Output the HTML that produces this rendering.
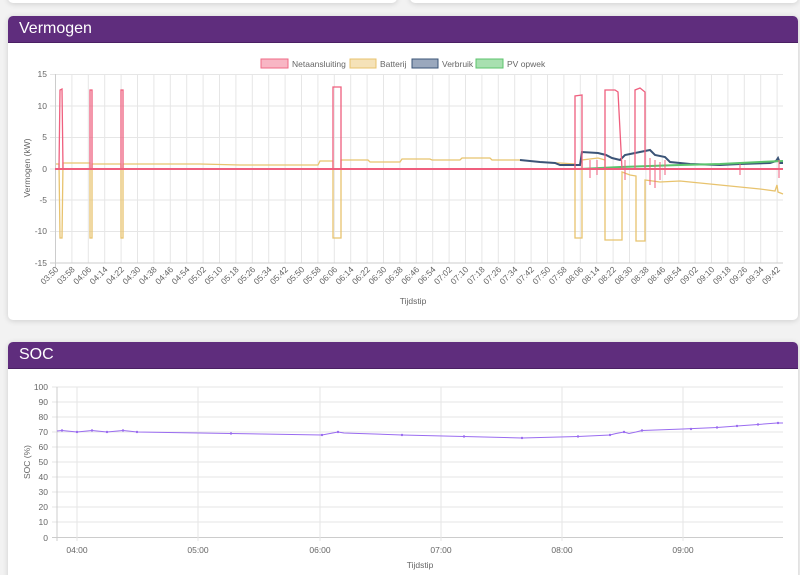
<!DOCTYPE html>
<html><head><meta charset="utf-8"><style>
html,body{margin:0;width:800px;height:575px;overflow:hidden}
body{background:#f2f2f2;font-family:"Liberation Sans",Arial,sans-serif;position:relative}
.card{position:absolute;background:#fff;border-radius:5px;box-shadow:0 1px 6px rgba(0,0,0,.15);overflow:hidden}
.hd{background:#5f2d7d;color:#fff;font-size:16px;height:26px;line-height:26px;padding-left:11px;border-bottom:1px solid #4a1f63}
svg{position:absolute;left:0;top:0}
text{font-family:"Liberation Sans",Arial,sans-serif;fill:#666;font-size:8.5px}
</style></head><body>
<div class="card" style="left:8px;top:-10px;width:389px;height:13px"></div>
<div class="card" style="left:410px;top:-10px;width:388px;height:13px"></div>
<div class="card" style="left:8px;top:16px;width:790px;height:304px"><div class="hd">Vermogen</div></div>
<div class="card" style="left:8px;top:342px;width:790px;height:245px"><div class="hd">SOC</div></div>
<svg width="800" height="575" viewBox="0 0 800 575">
<defs>
<pattern id="vg" x="55" y="0" width="16.4" height="600" patternUnits="userSpaceOnUse"><line x1="0.5" y1="0" x2="0.5" y2="600" stroke="#e6e6e6" stroke-width="1"/></pattern>
</defs>
<rect x="261" y="59" width="27" height="9" fill="#f8b6c4" stroke="#ef6a86"/><text x="292" y="67" font-size="9">Netaansluiting</text>
<rect x="350" y="59" width="26" height="9" fill="#f5e2b8" stroke="#e8c36e"/><text x="380" y="67" font-size="9">Batterij</text>
<rect x="412" y="59" width="26" height="9" fill="#9aa8bd" stroke="#3b5477"/><text x="442" y="67" font-size="9">Verbruik</text>
<rect x="476" y="59" width="27" height="9" fill="#a8e0b0" stroke="#5cc36d"/><text x="507" y="67" font-size="9">PV opwek</text>
<rect x="55" y="74" width="729" height="189" fill="url(#vg)"/>
<g stroke="#e6e6e6"><line x1="50" y1="74.5" x2="783" y2="74.5"/><line x1="50" y1="106" x2="783" y2="106"/><line x1="50" y1="137.5" x2="783" y2="137.5"/><line x1="50" y1="169" x2="783" y2="169"/><line x1="50" y1="200" x2="783" y2="200"/><line x1="50" y1="231.5" x2="783" y2="231.5"/><line x1="50" y1="263" x2="783" y2="263" stroke="#ccc"/><line x1="55.5" y1="74" x2="55.5" y2="267" stroke="#ccc"/></g>
<g text-anchor="end"><text x="47" y="77">15</text><text x="47" y="109">10</text><text x="47" y="140">5</text><text x="47" y="172">0</text><text x="47" y="203">-5</text><text x="47" y="234">-10</text><text x="47" y="266">-15</text></g>
<text transform="translate(30,168) rotate(-90)" text-anchor="middle">Vermogen (kW)</text>
<text x="413" y="304" text-anchor="middle" font-size="9">Tijdstip</text>
<g text-anchor="end" font-size="8">
<text transform="translate(59,270) rotate(-45)">03:50</text><text transform="translate(75.4,270) rotate(-45)">03:58</text><text transform="translate(91.8,270) rotate(-45)">04:06</text><text transform="translate(108.2,270) rotate(-45)">04:14</text><text transform="translate(124.6,270) rotate(-45)">04:22</text><text transform="translate(141,270) rotate(-45)">04:30</text><text transform="translate(157.4,270) rotate(-45)">04:38</text><text transform="translate(173.8,270) rotate(-45)">04:46</text><text transform="translate(190.2,270) rotate(-45)">04:54</text><text transform="translate(206.6,270) rotate(-45)">05:02</text><text transform="translate(223,270) rotate(-45)">05:10</text><text transform="translate(239.4,270) rotate(-45)">05:18</text><text transform="translate(255.8,270) rotate(-45)">05:26</text><text transform="translate(272.2,270) rotate(-45)">05:34</text><text transform="translate(288.6,270) rotate(-45)">05:42</text><text transform="translate(305,270) rotate(-45)">05:50</text><text transform="translate(321.4,270) rotate(-45)">05:58</text><text transform="translate(337.8,270) rotate(-45)">06:06</text><text transform="translate(354.2,270) rotate(-45)">06:14</text><text transform="translate(370.6,270) rotate(-45)">06:22</text><text transform="translate(387,270) rotate(-45)">06:30</text><text transform="translate(403.4,270) rotate(-45)">06:38</text><text transform="translate(419.8,270) rotate(-45)">06:46</text><text transform="translate(436.2,270) rotate(-45)">06:54</text><text transform="translate(452.6,270) rotate(-45)">07:02</text><text transform="translate(469,270) rotate(-45)">07:10</text><text transform="translate(485.4,270) rotate(-45)">07:18</text><text transform="translate(501.8,270) rotate(-45)">07:26</text><text transform="translate(518.2,270) rotate(-45)">07:34</text><text transform="translate(534.6,270) rotate(-45)">07:42</text><text transform="translate(551,270) rotate(-45)">07:50</text><text transform="translate(567.4,270) rotate(-45)">07:58</text><text transform="translate(583.8,270) rotate(-45)">08:06</text><text transform="translate(600.2,270) rotate(-45)">08:14</text><text transform="translate(616.6,270) rotate(-45)">08:22</text><text transform="translate(633,270) rotate(-45)">08:30</text><text transform="translate(649.4,270) rotate(-45)">08:38</text><text transform="translate(665.8,270) rotate(-45)">08:46</text><text transform="translate(682.2,270) rotate(-45)">08:54</text><text transform="translate(698.6,270) rotate(-45)">09:02</text><text transform="translate(715,270) rotate(-45)">09:10</text><text transform="translate(731.4,270) rotate(-45)">09:18</text><text transform="translate(747.8,270) rotate(-45)">09:26</text><text transform="translate(764.2,270) rotate(-45)">09:34</text><text transform="translate(780.6,270) rotate(-45)">09:42</text>
</g>
<polyline fill="none" stroke="#e8c36e" stroke-width="1.3" points="56,164 59,164 60,238 62,238 63,163 90,163 90,238 92,238 92,164 121,164 121,238 123,238 123,164 200,164 240,165 300,165 318,165 320,161 333,161 333,238 341,238 341,160 368,160 370,162 400,162 402,159 430,159 432,160 460,160 462,158 490,158 492,160 520,160 540,162 560,163 575,164 575,238 582,238 582,160 598,158 605,160 605,240 622,240 622,172 630,175 636,176 636,241 645,241 645,180 660,182 680,181 700,183 730,186 760,189 775,191 777,185 778,192 783,194"/>
<polyline fill="none" stroke="#3b5477" stroke-width="2" points="520,160 540,162 555,163 560,165 580,165 582,152 598,153 606,155 612,158 620,160 625,155 640,152 650,150 655,155 665,157 670,162 690,164 720,165 740,164 770,163 776,161 778,158 780,163 783,163"/>
<polyline fill="none" stroke="#5cc36d" stroke-width="2" points="580,169 600,168 620,167 650,166 680,165 720,164 760,162 783,161"/>
<polyline fill="none" stroke="#ef5f7e" stroke-width="1.3" points="56,169 59,169 60,90 62,89 63,169 90,169 90,90 92,90 92,169 121,169 121,90 123,90 123,169 333,169 333,87 341,87 341,169 575,169 575,96 582,95 582,169 605,169 605,90 615,90 618,92 622,169 635,169 635,90 640,88 645,92 645,169 783,169"/>
<line x1="55" y1="169" x2="783" y2="169" stroke="#ef5f7e" stroke-width="2"/>
<g stroke="#ef5f7e" stroke-width="1"><line x1="625" y1="160" x2="625" y2="180"/><line x1="650" y1="158" x2="650" y2="185"/><line x1="655" y1="160" x2="655" y2="188"/><line x1="660" y1="162" x2="660" y2="180"/><line x1="665" y1="160" x2="665" y2="175"/><line x1="590" y1="160" x2="590" y2="178"/><line x1="597" y1="160" x2="597" y2="175"/><line x1="740" y1="164" x2="740" y2="175"/><line x1="779" y1="160" x2="779" y2="178"/></g>
<g stroke="#e6e6e6"><line x1="52" y1="387" x2="783" y2="387"/><line x1="52" y1="402" x2="783" y2="402"/><line x1="52" y1="417" x2="783" y2="417"/><line x1="52" y1="432" x2="783" y2="432"/><line x1="52" y1="447" x2="783" y2="447"/><line x1="52" y1="462" x2="783" y2="462"/><line x1="52" y1="477" x2="783" y2="477"/><line x1="52" y1="492" x2="783" y2="492"/><line x1="52" y1="507" x2="783" y2="507"/><line x1="52" y1="522" x2="783" y2="522"/><line x1="52" y1="537.5" x2="783" y2="537.5" stroke="#ccc"/><line x1="57" y1="387" x2="57" y2="541" stroke="#ccc"/><line x1="77" y1="387" x2="77" y2="541"/><line x1="198" y1="387" x2="198" y2="541"/><line x1="320" y1="387" x2="320" y2="541"/><line x1="441" y1="387" x2="441" y2="541"/><line x1="562" y1="387" x2="562" y2="541"/><line x1="683" y1="387" x2="683" y2="541"/></g>
<g text-anchor="end"><text x="48" y="390">100</text><text x="48" y="405">90</text><text x="48" y="420">80</text><text x="48" y="435">70</text><text x="48" y="450">60</text><text x="48" y="465">50</text><text x="48" y="480">40</text><text x="48" y="495">30</text><text x="48" y="510">20</text><text x="48" y="525">10</text><text x="48" y="541">0</text></g>
<g text-anchor="middle" font-size="8.5"><text x="77" y="553">04:00</text><text x="198" y="553">05:00</text><text x="320" y="553">06:00</text><text x="441" y="553">07:00</text><text x="562" y="553">08:00</text><text x="683" y="553">09:00</text></g>
<text x="420" y="568" text-anchor="middle" font-size="9">Tijdstip</text>
<text transform="translate(30,462) rotate(-90)" text-anchor="middle">SOC (%)</text>
<polyline fill="none" stroke="#9a6cf0" stroke-width="1" points="57,431 62,430.5 77,432 92,430.5 107,432 123,430.5 137,432 231,433.5 322,435 338,432 344,433 402,435 464,436.5 522,438 578,436.5 610,435 616,433.5 624,432 629,433.5 636,432 642,430.5 683,429 717,427.5 737,426 758,424.5 777,423 783,423"/>
<g fill="#9a6cf0"><circle cx="62" cy="430.5" r="1.2"/><circle cx="77" cy="432" r="1.2"/><circle cx="92" cy="430.5" r="1.2"/><circle cx="107" cy="432" r="1.2"/><circle cx="123" cy="430.5" r="1.2"/><circle cx="137" cy="432" r="1.2"/><circle cx="231" cy="433.5" r="1.2"/><circle cx="322" cy="435" r="1.2"/><circle cx="338" cy="432" r="1.2"/><circle cx="402" cy="435" r="1.2"/><circle cx="464" cy="436.5" r="1.2"/><circle cx="522" cy="438" r="1.2"/><circle cx="578" cy="436.5" r="1.2"/><circle cx="610" cy="435" r="1.2"/><circle cx="624" cy="432" r="1.2"/><circle cx="642" cy="430.5" r="1.2"/><circle cx="691" cy="429" r="1.2"/><circle cx="717" cy="427.5" r="1.2"/><circle cx="737" cy="426" r="1.2"/><circle cx="758" cy="424.5" r="1.2"/><circle cx="778" cy="423" r="1.2"/></g>
</svg>
</body></html>
